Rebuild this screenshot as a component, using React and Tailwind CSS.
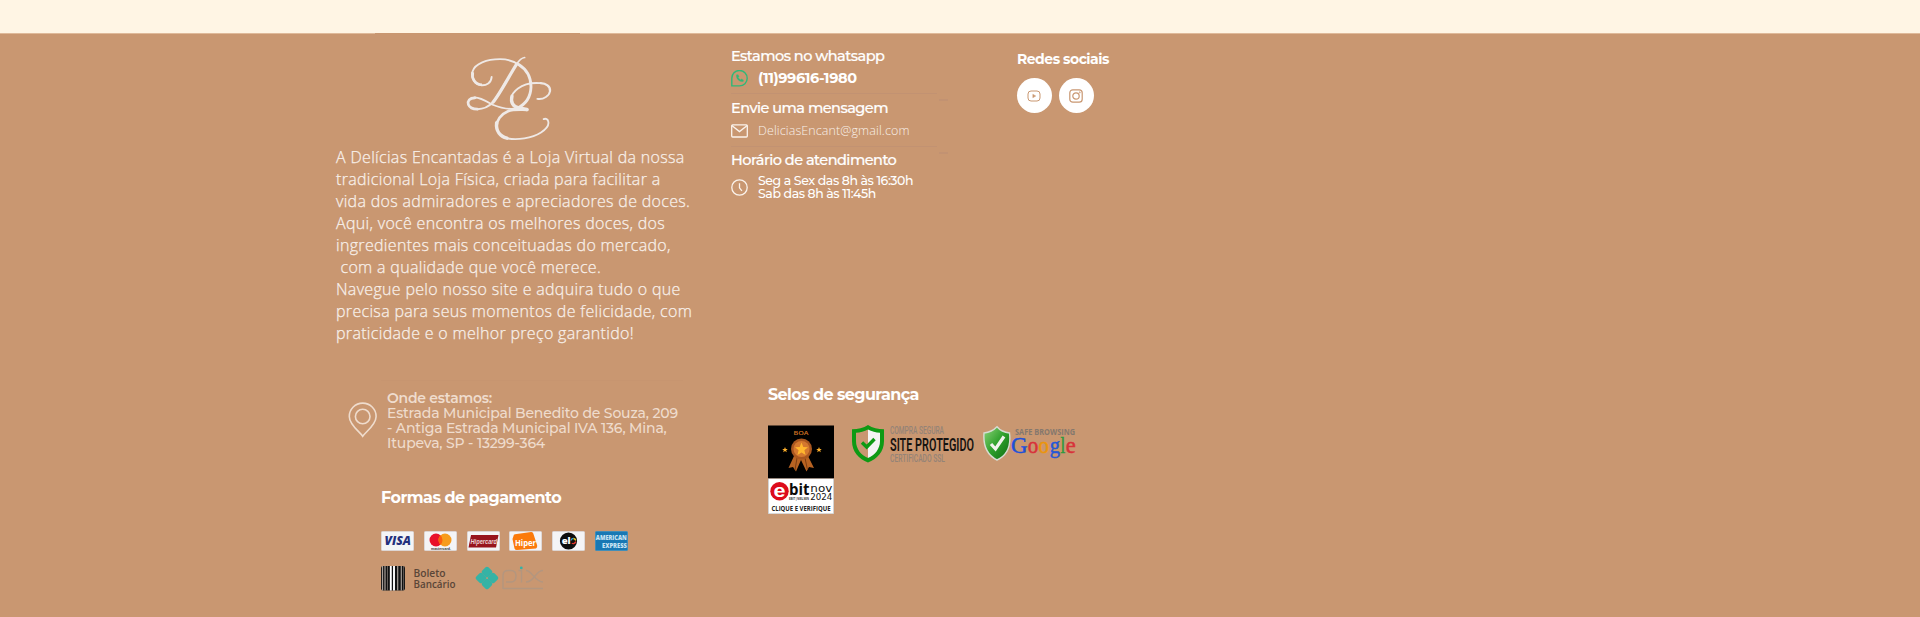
import React from "react";

const BODY = [
  "A Delícias Encantadas é a Loja Virtual da nossa",
  "tradicional Loja Física, criada para facilitar a",
  "vida dos admiradores e apreciadores de doces.",
  "Aqui, você encontra os melhores doces, dos",
  "ingredientes mais conceituadas do mercado,",
  " com a qualidade que você merece.",
  "Navegue pelo nosso site e adquira tudo o que",
  "precisa para seus momentos de felicidade, com",
  "praticidade e o melhor preço garantido!",
];

const GOOGLE = [
  ["G", 28, "#1d50d8", 16.5],
  ["o", 44.7, "#d8323a", 10.5],
  ["o", 55.5, "#eb950c", 10.5],
  ["g", 66.7, "#2557d6", 10.3],
  ["l", 77.5, "#2b9a3e", 4.7],
  ["e", 82.7, "#d8323a", 10],
];

function Monogram() {
  return (
    <svg viewBox="430 105 270 260" className="ml-[127px] mt-[21px] h-[87px] w-[90px]" fill="none" stroke="#efe9e6" strokeLinecap="round">
      <path strokeWidth="5.5" d="M513 170C512 188 497 197 481 195C461 192 451 173 456 153C463 130 498 117 538 117C562 117 582 124 597 135" />
      <path strokeWidth="8.5" d="M484 194C463 193 452 175 456 156" strokeLinecap="butt" />
      <path strokeWidth="8.5" d="M594 133C620 149 631 173 631 200C630 232 613 253 590 264" />
      <path strokeWidth="5.5" d="M590 264C567 269 536 262 514 253C495 242 478 231 461 232" />
      <path strokeWidth="8" d="M463 233C446 233 440 242 443 253C447 263 457 267 470 267" />
      <path strokeWidth="6" d="M470 267C490 267 505 259 517 246C531 229 546 203 556 184" />
      <path strokeWidth="9.5" d="M517 246C536 224 565 168 588 132" />
      <path strokeWidth="5" d="M588 132C596 119 603 113 612 112" />
      <path strokeWidth="5.5" d="M650 236C669 239 687 226 688 212" />
      <path strokeWidth="7" d="M688 212C689 198 676 190 660 189" />
      <path strokeWidth="5.5" d="M660 189C637 187 609 192 592 205C580 214 573 224 572 234" />
      <path strokeWidth="10" d="M574 228C569 247 577 259 594 263L619 268" />
      <path strokeWidth="8" d="M620 269C596 269 578 267 562 273C540 282 528 301 527 319" />
      <path strokeWidth="10.5" d="M528 308C525 333 539 349 559 354" />
      <path strokeWidth="5.5" d="M556 354C590 361 634 354 661 337C678 326 685 315 683 305C682 297 675 294 669 297" />
    </svg>
  );
}

function WhatsIcon() {
  return (
    <svg viewBox="0 0 17 17" className="h-[17px] w-[17px] shrink-0" fill="none" stroke="#2fb878" strokeWidth="1.4">
      <path d="M.8 15.900V8.300A7.700 7.700 0 1 1 8.500 15.900Z" />
      <path d="M5.500 4.800C4.800 8.600 8.300 12.200 12.200 11.500L12.400 9.900L10.500 8.900L9.500 9.800C8.400 9.300 7.700 8.500 7.200 7.500L8 6.500L7.100 4.700Z" fill="#2fb878" strokeWidth=".3" />
    </svg>
  );
}

function MailIcon() {
  return (
    <svg viewBox="0 0 17 14" className="h-[14px] w-[17px] shrink-0" fill="none" stroke="#fbf3ec" strokeWidth="1.3">
      <rect x=".7" y=".8" width="15.600" height="12.200" rx="1" />
      <path d="M.8 1.500L8.500 7.600L16.200 1.500" />
    </svg>
  );
}

function ClockIcon() {
  return (
    <svg viewBox="0 0 17 17" className="mt-[5px] h-[17px] w-[17px] shrink-0" fill="none" stroke="#fbf3ec" strokeWidth="1.3">
      <circle cx="8.500" cy="8.500" r="7.700" />
      <path d="M8.500 4.200V8.800L10.900 11.800" />
    </svg>
  );
}

function Divider() {
  return (
    <div className="relative mt-[5px] h-px w-[206px] bg-[#c29272]">
      <span className="absolute left-[208px] top-[6px] h-[2px] w-[9px] bg-[#c29272]" />
    </div>
  );
}

function Heading({ children }) {
  return (
    <h3 className="text-[14.500px] font-medium leading-5 tracking-[-0.52px] [-webkit-text-stroke:0.2px_white]">{children}</h3>
  );
}

function Medal() {
  return (
    <svg viewBox="0 0 66 89" className="h-[89px] w-[66px]">
      <rect y=".5" width="66" height="53" fill="#000" />
      <rect y="53.500" width="66" height="35.500" fill="#c9c9c9" />
      <rect x=".8" y="54" width="64.400" height="34.300" fill="#fff" />
      <text x="25.500" y="9.800" textLength="15" lengthAdjust="spacingAndGlyphs" fontFamily="Open Sans" fontSize="6" fontWeight="600" fill="#d87524">BOA</text>
      <path d="M26 31L20.500 43L25 42L28 46.500L33 35L38.500 46.500L41 42L46 43L40 31Z" fill="#b86322" />
      <path d="M29 33L27 45M37 33L39.500 45" stroke="#7d3d12" strokeWidth="1" />
      <circle cx="33.500" cy="24" r="10.500" fill="#a9561f" />
      <circle cx="33.500" cy="24" r="8" fill="#d4782f" />
      <path d="M33.500 17.500L35.300 22L40 22.300L36.400 25.300L37.600 30L33.500 27.400L29.400 30L30.600 25.300L27 22.300L31.700 22Z" fill="#ffb62e" />
      <path d="M17 22l.8 2h2l-1.600 1.300.6 2-1.800-1.200-1.800 1.200.6-2-1.600-1.300h2zM51 22l.8 2h2l-1.600 1.300.6 2-1.800-1.200-1.800 1.200.6-2-1.600-1.300h2z" fill="#ffb12b" />
      <circle cx="11.500" cy="66.300" r="9.200" fill="#dd0b1b" />
      <text x="5.600" y="71.700" textLength="12" lengthAdjust="spacingAndGlyphs" fontFamily="Liberation Sans" fontSize="19" fontWeight="700" fill="#fff">e</text>
      <text x="21" y="70.300" textLength="20.500" lengthAdjust="spacingAndGlyphs" fontFamily="Open Sans" fontSize="16" fontWeight="700" fill="#0a0a0a">bit</text>
      <text x="21" y="75" textLength="20" lengthAdjust="spacingAndGlyphs" fontFamily="Liberation Sans" fontSize="3.600" fontWeight="700" fill="#333">EBIT | NIELSEN</text>
      <text x="42.300" y="67.200" textLength="22" lengthAdjust="spacingAndGlyphs" fontFamily="DejaVu Sans" fontSize="11" fill="#111">nov</text>
      <text x="42.300" y="74.800" textLength="22" lengthAdjust="spacingAndGlyphs" fontFamily="DejaVu Sans" fontSize="9" fill="#111">2024</text>
      <text x="3.500" y="86" textLength="59" lengthAdjust="spacingAndGlyphs" fontFamily="Open Sans" fontSize="6.500" fontWeight="700" fill="#222">CLIQUE E VERIFIQUE</text>
    </svg>
  );
}

function SslSeal() {
  return (
    <svg viewBox="0 0 124 38" className="ml-[18px] h-[38px] w-[124px]">
      <path d="M16 0C11.500 3 6 4.200 0 4.200V16C0 27 7 34 16 37.500C25 34 32 27 32 16V4.200C26 4.200 20.500 3 16 0Z" fill="#0e9a14" />
      <path d="M16 4.500C12.500 6.500 8 7.600 4 7.700V16C4 24 9 30 16 33Z" fill="#c99771" />
      <path d="M16 4.500C19.500 6.500 24 7.600 28 7.700V16C28 24 23 30 16 33Z" fill="#f4f4f4" />
      <path d="M10 17.500L14.700 22L22.500 14" fill="none" stroke="#0e9a14" strokeWidth="3.400" />
      <text x="38" y="9" textLength="54" lengthAdjust="spacingAndGlyphs" fontFamily="Roboto" fontSize="10.500" fontWeight="500" fill="#948377">COMPRA SEGURA</text>
      <text x="38" y="25.500" textLength="84" lengthAdjust="spacingAndGlyphs" fontFamily="Roboto" fontSize="18.500" fontWeight="600" fill="#171310">SITE PROTEGIDO</text>
      <text x="38" y="36.800" textLength="55" lengthAdjust="spacingAndGlyphs" fontFamily="Roboto" fontSize="10.500" fontWeight="500" fill="#948377">CERTIFICADO SSL</text>
    </svg>
  );
}

function GoogleSeal() {
  return (
    <svg viewBox="0 0 94 38" className="ml-[7px] h-[38px] w-[94px]">
      <defs>
        <linearGradient id="shield" x1="0" y1="0" x2="1" y2="1">
          <stop offset="0" stopColor="#8fd47a" />
          <stop offset=".5" stopColor="#2ea02c" />
          <stop offset="1" stopColor="#0c6a12" />
        </linearGradient>
      </defs>
      <path d="M14 1.800C10 6 6 7.500 1 8C0 21 4 30 14 35C25 30 28 20 26.500 8C21.500 7.500 17.500 6 14 1.800Z" fill="url(#shield)" stroke="#d6dcd2" strokeWidth="1.400" />
      <path d="M8 19L12.500 24L21 11.500" fill="none" stroke="#f1f3ee" strokeWidth="3.200" />
      <text x="32" y="10" textLength="60" lengthAdjust="spacingAndGlyphs" fontFamily="Open Sans" fontSize="8" fontWeight="700" fill="#85786d">SAFE BROWSING</text>
      {GOOGLE.map(([ch, x, color, w]) => (
        <text key={x} x={x} y="28.300" textLength={w} lengthAdjust="spacingAndGlyphs" fontFamily="Liberation Serif" fontSize="22.500" fill={color} stroke={color} strokeWidth=".5">{ch}</text>
      ))}
    </svg>
  );
}

function Card({ children, fill = "#f4f4f6", edge = "#dcdcdf" }) {
  return (
    <svg viewBox="0 0 33 20" className="h-[20px] w-[33px]">
      <rect x=".4" y=".4" width="32.200" height="19.200" rx="1.200" fill={fill} stroke={edge} strokeWidth=".8" />
      {children}
    </svg>
  );
}

function Cards() {
  return (
    <div className="ml-[44px] mt-[23px] flex gap-[9.800px]">
      <Card>
        <text x="3.500" y="14.300" textLength="26.500" lengthAdjust="spacingAndGlyphs" fontFamily="Open Sans" fontStyle="italic" fontWeight="800" fontSize="12" fill="#25307c">VISA</text>
      </Card>
      <Card>
        <circle cx="12" cy="9" r="6.500" fill="#e8102a" />
        <circle cx="21" cy="9" r="6.500" fill="#f79c1c" />
        <path d="M16.500 4.300A6.500 6.500 0 0 1 16.500 13.700A6.500 6.500 0 0 1 16.500 4.300Z" fill="#fb6010" />
        <text x="7" y="18.700" textLength="20" lengthAdjust="spacingAndGlyphs" fontFamily="Liberation Sans" fontWeight="700" fontSize="4" fill="#333">mastercard.</text>
      </Card>
      <Card>
        <path d="M4 4H31.500L29 16.500H1.500Z" fill="#97141d" />
        <text x="3.500" y="12.600" textLength="26.500" lengthAdjust="spacingAndGlyphs" fontFamily="Liberation Sans" fontStyle="italic" fontWeight="700" fontSize="6.500" fill="#ecd5d5">Hipercard</text>
      </Card>
      <Card>
        <path d="M4.500 5Q4.500 3.600 6 3.300L22 .9Q24 .7 24.300 2.500L28.200 14.500Q28.500 16.500 27 17.500L8 19Q6 19 5.500 17.500L3.500 8Z" fill="#fb7a0b" />
        <text x="6" y="14.700" textLength="21" lengthAdjust="spacingAndGlyphs" fontFamily="Open Sans" fontWeight="700" fontSize="9" fill="#fff">Hiper</text>
      </Card>
      <Card>
        <circle cx="16.500" cy="10" r="8.600" fill="#0d0d0d" />
        <text x="9.700" y="13.300" textLength="9" lengthAdjust="spacingAndGlyphs" fontFamily="Open Sans" fontWeight="800" fontSize="9" fill="#fff">el</text>
        <path d="M19 9.500a2.400 2.400 0 0 1 2.500-2" fill="none" stroke="#2aa9e0" strokeWidth="1.300" />
        <path d="M21.500 7.500a2.600 2.600 0 0 1 2.200 2" fill="none" stroke="#f4d31f" strokeWidth="1.300" />
        <path d="M23.700 10.500a2.600 2.600 0 0 1-3.900 1.700" fill="none" stroke="#e5352b" strokeWidth="1.300" />
      </Card>
      <Card fill="#1878b4" edge="#3190c6">
        <text x=".8" y="9.400" textLength="31" lengthAdjust="spacingAndGlyphs" fontFamily="Open Sans" fontWeight="800" fontSize="6.500" fill="#c9e3f2">AMERICAN</text>
        <text x="7" y="17" textLength="25" lengthAdjust="spacingAndGlyphs" fontFamily="Open Sans" fontWeight="800" fontSize="6.500" fill="#c9e3f2">EXPRESS</text>
      </Card>
    </div>
  );
}

function Boleto() {
  return (
    <svg viewBox="0 0 76 25" className="h-[25px] w-[76px]">
      <rect width="24" height="24.500" rx="2" fill="#111" />
      <path d="M1.500 0V24.500M4 0V24.500M16.700 0V24.500M20.300 0V24.500" stroke="#a8a09a" strokeWidth="1.200" />
      <path d="M22.600 0V24.500M6.500 0V24.500" stroke="#77706b" strokeWidth=".8" />
      <path d="M9.800 0V24.500M13 0V24.500" stroke="#fff" strokeWidth="1.900" />
      <text x="32.500" y="11" textLength="32" lengthAdjust="spacingAndGlyphs" fontFamily="Open Sans" fontSize="10" fontWeight="600" fill="#5a4638">Boleto</text>
      <text x="32.500" y="21.500" textLength="42" lengthAdjust="spacingAndGlyphs" fontFamily="Open Sans" fontSize="10" fontWeight="600" fill="#5a4638">Bancário</text>
    </svg>
  );
}

function Pix() {
  return (
    <svg viewBox="0 0 70 25" className="ml-[18px] h-[25px] w-[70px]">
      <g fill="#35b3a5">
        <rect x="7.700" y="1.700" width="8.600" height="8.600" rx="2" transform="rotate(45 12 6)" />
        <rect x="7.700" y="13.700" width="8.600" height="8.600" rx="2" transform="rotate(45 12 18)" />
        <rect x="1.700" y="7.700" width="8.600" height="8.600" rx="2" transform="rotate(45 6 12)" />
        <rect x="13.700" y="7.700" width="8.600" height="8.600" rx="2" transform="rotate(45 18 12)" />
        <circle cx="46.300" cy="1.900" r="1.400" />
      </g>
      <g fill="none" stroke="#b3967f" strokeWidth="1.400">
        <path d="M28 23V9.500Q28 4.500 33 4.500H36Q41 4.500 41 10Q41 16 36 16H31M43.500 4.500H46.500V16.500M51 4.500C57 4.500 60 16 68 16M51 16C60 16 60 4.500 68 4.500M28 22.500H68" />
      </g>
    </svg>
  );
}

export default function App() {
  return (
    <div className="h-[617px] w-full overflow-hidden bg-[#c99771] font-['Montserrat','Inter',sans-serif] text-white">
      <div className="h-[33px] bg-[#fff5e4]" />
      <div className="flex h-px justify-between">
        <div className="w-[375px] bg-[#dfb999]" />
        <div className="w-[1340px] bg-[#dfb999]" />
      </div>

      <footer className="pl-[337px]">
        <section className="flex h-[346px]">
          <div className="w-[394px]">
            <Monogram />
            <div className="-ml-px mt-[4px] whitespace-pre font-['Open_Sans',sans-serif] text-[16px] font-light leading-[22px] tracking-[0.32px] text-[#f8f0ea] [-webkit-text-stroke:0.25px_#f8f0ea]">
              {BODY.map((line) => (
                <p key={line}>{line}</p>
              ))}
            </div>
          </div>

          <div className="w-[286px] whitespace-nowrap pt-[12px]">
            <Heading>Estamos no whatsapp</Heading>
            <div className="mt-[2px] flex h-5 items-center gap-[10px]">
              <WhatsIcon />
              <span className="text-[14.500px] font-bold leading-5 tracking-[-0.4px]">(11)99616-1980</span>
            </div>
            <Divider />
            <div className="mt-[4px]">
              <Heading>Envie uma mensagem</Heading>
            </div>
            <div className="mt-[3px] flex h-5 items-center gap-[10px]">
              <MailIcon />
              <span className="font-['Open_Sans',sans-serif] text-[12.500px] font-light leading-5 tracking-[0.1px] text-[#f8efe8]">DeliciasEncant@gmail.com</span>
            </div>
            <Divider />
            <div className="mt-[3px]">
              <Heading>Horário de atendimento</Heading>
            </div>
            <div className="mt-[4px] flex items-start gap-[10px]">
              <ClockIcon />
              <p className="text-[12.500px] font-medium leading-[13px] tracking-[-0.4px]">Seg a Sex das 8h às 16:30h<br />Sab das 8h às 11:45h</p>
            </div>
          </div>

          <div className="pt-[15px]">
            <h3 className="text-[14px] font-bold leading-5 tracking-[-0.5px]">Redes sociais</h3>
            <div className="mt-[9px] flex gap-[7px]">
              <a className="flex h-[35px] w-[35px] items-center justify-center rounded-full bg-white">
                <svg viewBox="0 0 14 14" className="mr-[2px] h-[14px] w-[14px]" fill="none" stroke="#c99771" strokeWidth="1">
                  <rect x="1" y="2" width="12" height="10" rx="3" />
                  <path d="M5.800 5.200V8.800L8.800 7Z" fill="#c99771" strokeWidth=".4" />
                </svg>
              </a>
              <a className="flex h-[35px] w-[35px] items-center justify-center rounded-full bg-white">
                <svg viewBox="0 0 14 14" className="mr-px h-[14px] w-[14px]" fill="none" stroke="#c99771" strokeWidth="1.200">
                  <rect x=".8" y=".8" width="12.400" height="12.400" rx="3" />
                  <circle cx="7" cy="7" r="3.200" />
                  <circle cx="10.700" cy="3.400" r=".3" />
                </svg>
              </a>
            </div>
          </div>
        </section>

        <section className="flex">
          <div className="w-[431px] whitespace-nowrap">
            <div className="ml-[44px] h-px w-[302px] bg-[#c79570]" />
            <div className="ml-[11px] mt-[10px] flex text-[#efdccd]">
              <svg viewBox="0 0 30 36" className="mt-[11px] h-[36px] w-[30px]" fill="none" stroke="currentColor" strokeWidth="1.600">
                <path d="M14.700 34.300C12 30 1.300 23 1.300 14.500A13.400 13.400 0 0 1 28.100 14.500C28.100 23 17.500 30 14.700 34.300Z" />
                <circle cx="14.700" cy="14.500" r="7.300" />
              </svg>
              <div className="ml-[9px] text-[14px] font-medium leading-[15px] tracking-[-0.16px]">
                <h4 className="font-semibold tracking-[-0.25px]">Onde estamos:</h4>
                <p>Estrada Municipal Benedito de Souza, 209</p>
                <p>- Antiga Estrada Municipal IVA 136, Mina,</p>
                <p>Itupeva, SP - 13299-364</p>
              </div>
            </div>
            <h3 className="ml-[44px] mt-[37px] text-[16px] font-bold leading-5 tracking-[-0.5px]">Formas de pagamento</h3>
            <Cards />
            <div className="ml-[44px] mt-[15px] flex">
              <Boleto />
              <Pix />
            </div>
          </div>

          <div className="pt-[5px]">
            <h3 className="text-[16px] font-bold leading-5 tracking-[-0.6px]">Selos de segurança</h3>
            <div className="mt-[20px] flex items-start">
              <Medal />
              <SslSeal />
              <GoogleSeal />
            </div>
          </div>
        </section>
      </footer>
    </div>
  );
}
